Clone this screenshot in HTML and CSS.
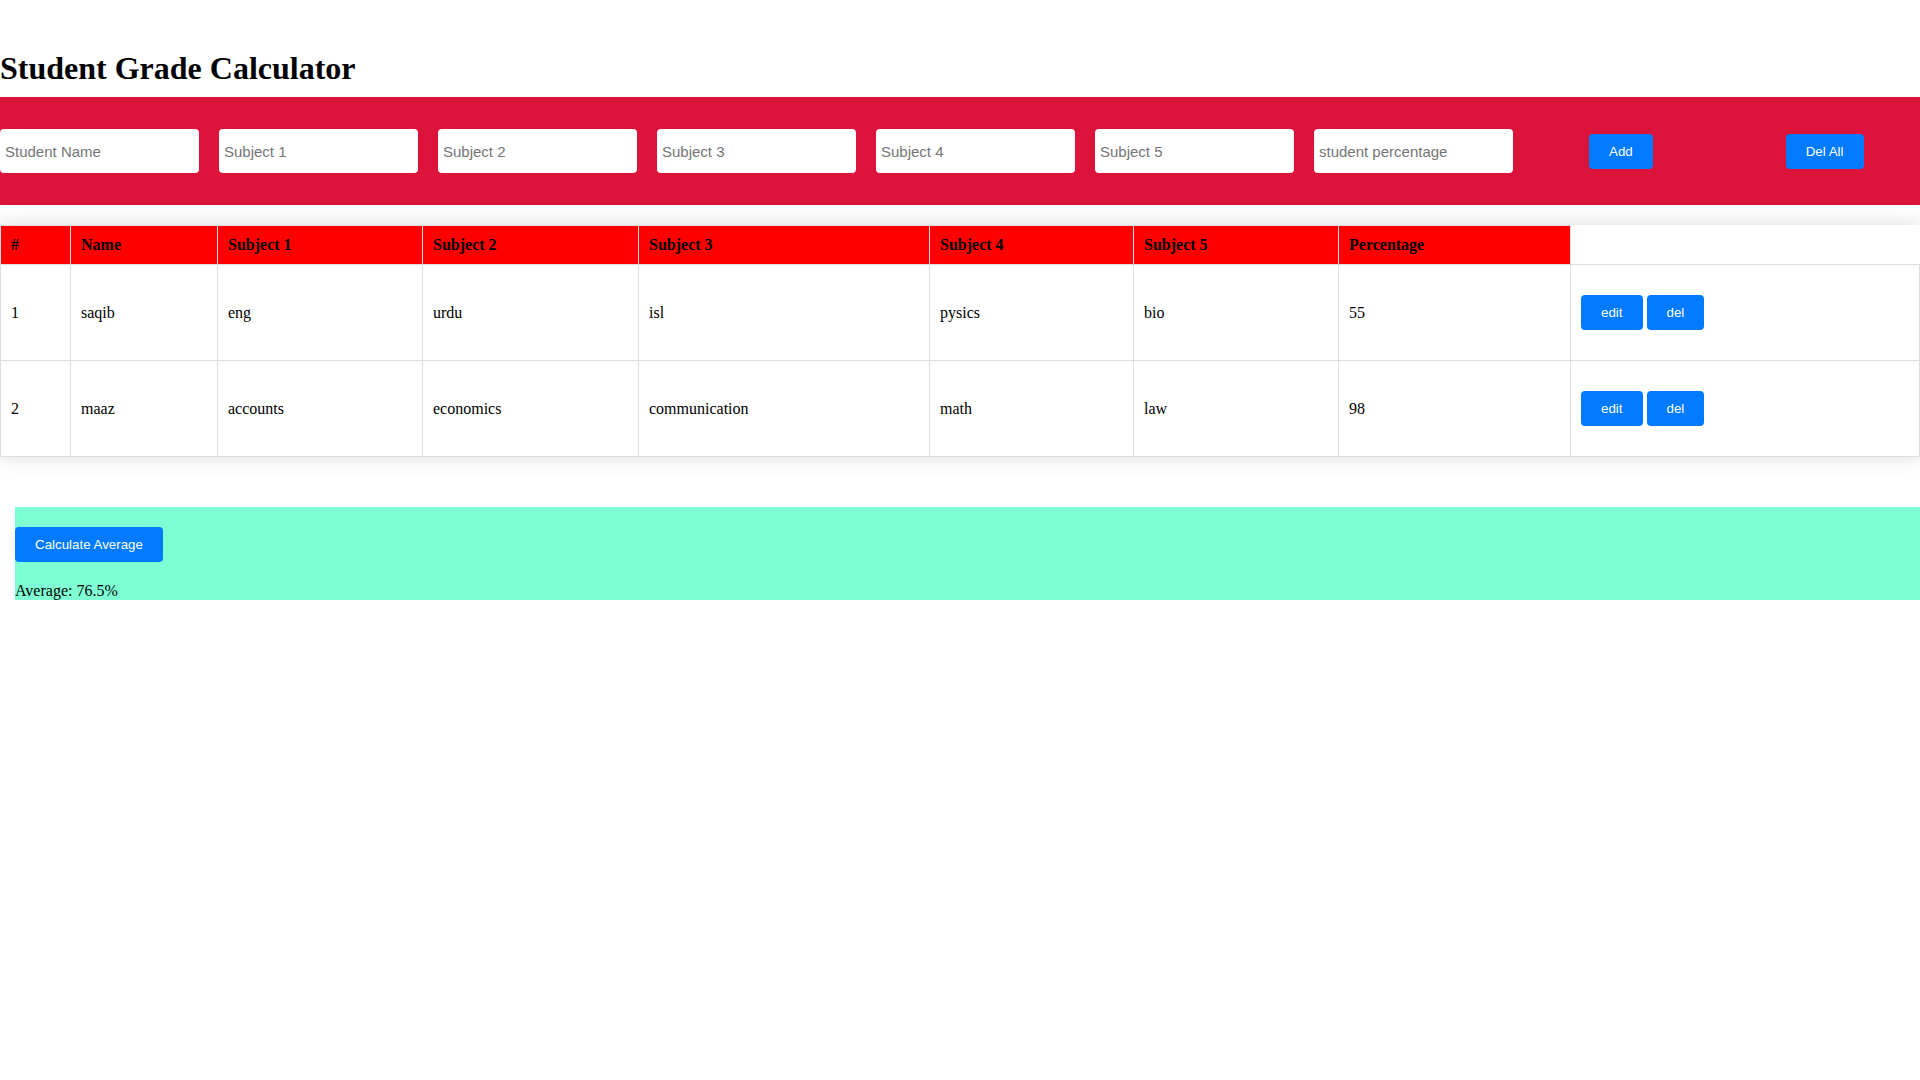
FILE: index.html
```html
<!DOCTYPE html>
<html lang="en">
<head>
<meta charset="utf-8">
<title>Student Grade Calculator</title>
<link rel="stylesheet" href="styles.css">
</head>
<body>
<h1 class="title">Student Grade Calculator</h1>
<div class="form-bar">
  <input class="field" type="text" placeholder="Student Name">
  <input class="field" type="text" placeholder="Subject 1">
  <input class="field" type="text" placeholder="Subject 2">
  <input class="field" type="text" placeholder="Subject 3">
  <input class="field" type="text" placeholder="Subject 4">
  <input class="field" type="text" placeholder="Subject 5">
  <input class="field" type="text" placeholder="student percentage">
  <button class="btn btn-add">Add</button>
  <button class="btn btn-delall">Del All</button>
</div>
<table class="grades">
  <colgroup>
    <col class="w-num"><col class="w-name"><col class="w-s1"><col class="w-s2"><col class="w-s3"><col class="w-s4"><col class="w-s5"><col class="w-pct"><col>
  </colgroup>
  <thead>
    <tr>
      <th>#</th><th>Name</th><th>Subject 1</th><th>Subject 2</th><th>Subject 3</th><th>Subject 4</th><th>Subject 5</th><th>Percentage</th>
    </tr>
  </thead>
  <tbody>
    <tr>
      <td>1</td><td>saqib</td><td>eng</td><td>urdu</td><td>isl</td><td>pysics</td><td>bio</td><td>55</td>
      <td><button class="btn">edit</button> <button class="btn">del</button></td>
    </tr>
    <tr>
      <td>2</td><td>maaz</td><td>accounts</td><td>economics</td><td>communication</td><td>math</td><td>law</td><td>98</td>
      <td><button class="btn">edit</button> <button class="btn">del</button></td>
    </tr>
  </tbody>
</table>
<div class="average">
  <button class="btn btn-calc">Calculate Average</button>
  <div class="result">Average: 76.5%</div>
</div>
</body>
</html>
```
FILE: styles.css
```css
html, body {
  margin: 0;
  padding: 0;
  background: #ffffff;
}
body {
  font-family: "Liberation Serif", "Times New Roman", serif;
  font-size: 16px;
  color: #000;
}
.title {
  font-size: 32px;
  font-weight: bold;
  margin: 50px 0 10px 0;
}
.form-bar {
  background: #dc143c;
  display: flex;
  align-items: center;
  gap: 20px;
  padding: 32px 0;
}
.field {
  width: 199px;
  height: 44px;
  box-sizing: border-box;
  border: none;
  border-radius: 4px;
  padding: 0 5px;
  background: #fff;
  font-family: "Liberation Sans", Arial, sans-serif;
  font-size: 15px;
  color: #000;
  outline: none;
}
.field::placeholder {
  color: #757575;
}
.btn {
  background: #007bff;
  color: #fff;
  border: none;
  border-radius: 4px;
  padding: 10px 20px;
  font-family: "Liberation Sans", Arial, sans-serif;
  font-size: 13.333px;
  cursor: pointer;
}
.btn-add {
  margin-left: 56px;
}
.btn-delall {
  margin-left: 113px;
}
.grades {
  width: 100%;
  margin-top: 20px;
  border-collapse: collapse;
  table-layout: fixed;
  box-shadow: 0 0 20px rgba(0, 0, 0, 0.15);
}
.w-num { width: 70px; }
.w-name { width: 147px; }
.w-s1 { width: 205px; }
.w-s2 { width: 216px; }
.w-s3 { width: 291px; }
.w-s4 { width: 204px; }
.w-s5 { width: 205px; }
.w-pct { width: 232px; }
.grades th,
.grades td {
  border: 1px solid #ddd;
  text-align: left;
}
.grades th {
  background: #ff0000;
  padding: 10px;
  font-weight: bold;
}
.grades td {
  padding: 30px 10px;
}
.average {
  background: #7fffd4;
  margin: 50px 0 0 15px;
}
.btn-calc {
  margin: 20px 0;
}
.result {
  line-height: normal;
}
```
